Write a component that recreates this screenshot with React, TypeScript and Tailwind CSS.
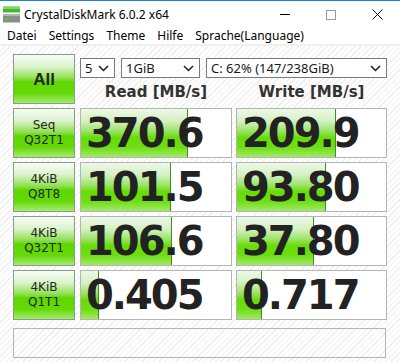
import { ReactNode } from 'react';

// log scale used by the bars: 0.1 MB/s .. 10000 MB/s
function barPercent(value: number) {
  const p = (Math.log10(value * 10) / 5) * 100;
  return Math.max(0, Math.min(100, p));
}

const rows = [
  { top: 'Seq', bottom: 'Q32T1', read: '370.6', write: '209.9' },
  { top: '4KiB', bottom: 'Q8T8', read: '101.5', write: '93.80' },
  { top: '4KiB', bottom: 'Q32T1', read: '106.6', write: '37.80' },
  { top: '4KiB', bottom: 'Q1T1', read: '0.405', write: '0.717' },
];

const greenButton =
  'border border-[#879c85] bg-[linear-gradient(to_bottom,#f8fcf6_0%,#dcf3cd_24%,#93e157_47%,#5ed700_57%,#66d90a_80%,#a6ec70_100%)] text-[#262626]';

function Chevron() {
  return (
    <svg width="11" height="7" viewBox="0 0 11 7" className="shrink-0">
      <path d="M1 1 L5.5 5.5 L10 1" fill="none" stroke="#1f1f1f" strokeWidth="1.5" />
    </svg>
  );
}

function Select({ width, children }: { width: string; children: ReactNode }) {
  return (
    <div
      className={`${width} h-[20px] bg-white border border-[#7a7a7a] flex items-center justify-between pl-[4px] pr-[5px] text-[13px] text-[#1a1a1a] leading-none`}
    >
      <span>{children}</span>
      <Chevron />
    </div>
  );
}

function ValueBox({ value, width }: { value: string; width: string }) {
  const pct = barPercent(parseFloat(value));
  return (
    <div className={`${width} h-[50px] relative bg-white border border-[#b4b4b4] flex items-center overflow-hidden`}>
      <div
        className="absolute left-0 top-0 bottom-0 border-r border-[#3f8f1c] bg-[linear-gradient(to_bottom,#eef8ea_0%,#d4f1c2_25%,#9fe46e_45%,#68dc06_60%,#6ede14_80%,#a2ea66_100%)]"
        style={{ width: `${pct}%` }}
      />
      <span className="relative pl-[5px] text-[40px] font-bold tracking-[-2px] text-[#222] leading-none font-['DejaVu_Sans',sans-serif]">
        {value}
      </span>
    </div>
  );
}

function AppIcon() {
  return (
    <svg width="17" height="17" viewBox="0 0 17 17">
      <rect x="0" y="0.5" width="17" height="6" fill="#3dbb2a" />
      <rect x="0" y="1" width="17" height="2" fill="#7fdc5e" />
      <rect x="0" y="8" width="17" height="8.5" fill="#8c8c8c" />
      <rect x="0" y="8" width="17" height="2" fill="#b4b4b4" />
      <rect x="2" y="12" width="4" height="2" fill="#4ccf2a" />
    </svg>
  );
}

export default function App() {
  return (
    <div className="w-[400px] h-[362px] bg-white overflow-hidden flex flex-col font-['Noto_Sans',sans-serif]">
      {/* title bar */}
      <div className="h-[28px] border-t border-[#1883d7] flex items-center shrink-0">
        <div className="pl-[3px] pr-[4px] flex items-center">
          <AppIcon />
        </div>
        <span className="text-[12px] text-black leading-none">CrystalDiskMark 6.0.2 x64</span>
        <div className="ml-auto flex items-center h-full">
          <div className="w-[46px] h-full flex items-center justify-center">
            <div className="w-[10px] h-px bg-black" />
          </div>
          <div className="w-[46px] h-full flex items-center justify-center">
            <div className="w-[10px] h-[10px] border border-[#9a9a9a]" />
          </div>
          <div className="w-[46px] h-full flex items-center justify-center">
            <svg width="11" height="11" viewBox="0 0 11 11">
              <path d="M0.5 0.5 L10.5 10.5 M10.5 0.5 L0.5 10.5" stroke="#111" strokeWidth="1" />
            </svg>
          </div>
        </div>
      </div>

      {/* menu bar */}
      <div className="h-[16px] flex items-center gap-[12px] pl-[7px] text-[12px] text-black leading-none shrink-0">
        <span>Datei</span>
        <span>Settings</span>
        <span>Theme</span>
        <span>Hilfe</span>
        <span>Sprache(Language)</span>
      </div>
      <div className="h-[2px] bg-[#f0f0f0] shrink-0" />

      {/* main */}
      <div className="flex-1 bg-[repeating-linear-gradient(135deg,#ffffff_0px,#ffffff_3px,#eeeeee_3px,#eeeeee_4px)] pl-[13px] pt-[8px] flex flex-col gap-[4px] font-['DejaVu_Sans',sans-serif]">
        <div className="flex h-[50px]">
          <div className={`w-[62px] h-[50px] ${greenButton} flex items-center justify-center`}>
            <span className="text-[17px] font-bold leading-none font-['Liberation_Sans',sans-serif]">All</span>
          </div>
          <div className="ml-[5px] w-[307px] flex flex-col">
            <div className="flex mt-[4px] font-['Noto_Sans',sans-serif]">
              <Select width="w-[35px]">5</Select>
              <div className="ml-[6px]">
                <Select width="w-[79px]">1GiB</Select>
              </div>
              <div className="ml-[6px]">
                <Select width="w-[181px]">C: 62% (147/238GiB)</Select>
              </div>
            </div>
            <div className="flex mt-[7px] text-[15px] font-bold text-[#333] leading-none">
              <div className="w-[152px] text-center">Read [MB/s]</div>
              <div className="ml-[4px] w-[151px] text-center">Write [MB/s]</div>
            </div>
          </div>
        </div>

        {rows.map((r, i) => (
          <div key={i} className="flex h-[50px]">
            <div
              className={`w-[62px] h-[50px] ${greenButton} flex flex-col items-center justify-center text-[12px] leading-[15px]`}
            >
              <span>{r.top}</span>
              <span>{r.bottom}</span>
            </div>
            <div className="ml-[5px]">
              <ValueBox value={r.read} width="w-[152px]" />
            </div>
            <div className="ml-[4px]">
              <ValueBox value={r.write} width="w-[151px]" />
            </div>
          </div>
        ))}

        <div className="mt-[4px] w-[373px] h-[30px] border border-[#b4b4b4]" />
      </div>
    </div>
  );
}
